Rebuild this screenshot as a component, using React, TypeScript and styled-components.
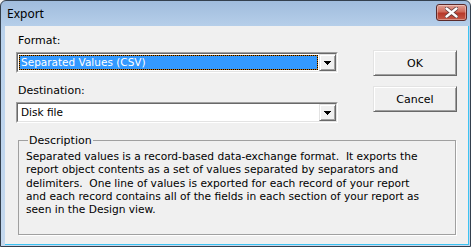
import React from "react";
import styled, { createGlobalStyle } from "styled-components";

const Global = createGlobalStyle`
  html, body { margin: 0; padding: 0; background: #f0f0f0; }
  body { width: 471px; height: 247px; overflow: hidden; }
`;

const UI = `"DejaVu Sans", Verdana, sans-serif`;

const Window = styled.div`
  box-sizing: border-box;
  width: 471px;
  height: 247px;
  display: flex;
  flex-direction: column;
  border: 1px solid #34404e;
  border-radius: 6px 6px 0 0;
  background: linear-gradient(#a0bcdd, #bad2ec 30px, #c4d8ee);
  overflow: hidden;
`;

const TitleBar = styled.div`
  height: 25px;
  flex: none;
  display: flex;
  align-items: center;
  justify-content: space-between;
  padding: 0 3px 0 6px;
`;

const Title = styled.span`
  font-family: "Noto Sans", "Open Sans", sans-serif;
  font-size: 12px;
  color: #000;
  margin-top: -1px;
`;

const CloseButton = styled.div`
  box-sizing: border-box;
  width: 31px;
  height: 17px;
  margin-top: -3px;
  border: 1px solid #5b2a2a;
  border-radius: 3px;
  background: linear-gradient(#e0a195, #cf6a5a 45%, #b7392a 55%, #c45a48);
  box-shadow: inset 0 0 0 1px rgba(255, 255, 255, 0.35);
  display: flex;
  align-items: center;
  justify-content: center;
`;

const Client = styled.div`
  flex: 1;
  margin: 0 1px 1px 4px;
  background: #f0f0f0;
  border-right: 1px solid #3cc3f2;
  border-bottom: 1px solid #3cc3f2;
  padding: 8px 0 0 11px;
  display: flex;
  flex-direction: column;
  font-family: ${UI};
  color: #000;
`;

const TopArea = styled.div`
  display: flex;
  align-items: flex-start;
`;

const FormColumn = styled.div`
  width: 322px;
  display: flex;
  flex-direction: column;
`;

const Label = styled.div<{ $gap?: number }>`
  font-size: 11px;
  line-height: 13px;
  margin-left: 2px;
  margin-top: ${(p) => p.$gap ?? 0}px;
`;

const Combo = styled.div`
  box-sizing: border-box;
  height: 21px;
  margin-top: 5px;
  display: flex;
  border-style: solid;
  border-width: 1px;
  border-color: #a0a0a0 #ffffff #ffffff #a0a0a0;
  background: #fff;
`;

const ComboInner = styled.div`
  flex: 1;
  display: flex;
  border-style: solid;
  border-width: 1px;
  border-color: #696969 #e3e3e3 #e3e3e3 #696969;
`;

const ValueArea = styled.div`
  flex: 1;
  padding: 1px;
  display: flex;
`;

const Highlight = styled.div<{ $selected?: boolean }>`
  flex: 1;
  background: ${(p) => (p.$selected ? "#c87814" : "transparent")};
  display: flex;
`;

const HighlightFill = styled.div<{ $selected?: boolean }>`
  flex: 1;
  box-sizing: border-box;
  border: 1px ${(p) => (p.$selected ? "dotted #000" : "solid transparent")};
  background: ${(p) => (p.$selected ? "#3399ff" : "#fff")};
  background-clip: padding-box;
  color: ${(p) => (p.$selected ? "#fff" : "#000")};
  font-size: 10.5px;
  line-height: 13px;
  padding-left: 1px;
  white-space: nowrap;
`;

const ArrowButton = styled.div`
  box-sizing: border-box;
  width: 17px;
  display: flex;
  align-items: center;
  justify-content: center;
  background: #f0f0f0;
  border-style: solid;
  border-width: 1px;
  border-color: #e3e3e3 #696969 #696969 #e3e3e3;
  box-shadow: inset 1px 1px 0 #fff, inset -1px -1px 0 #a0a0a0;
`;

const ButtonColumn = styled.div`
  margin-left: 35px;
  margin-top: 16px;
  display: flex;
  flex-direction: column;
  gap: 10px;
`;

const Button = styled.div`
  box-sizing: border-box;
  width: 84px;
  height: 26px;
  display: flex;
  align-items: center;
  justify-content: center;
  font-size: 11px;
  background: #f0f0f0;
  border-style: solid;
  border-width: 1px;
  border-color: #e3e3e3 #696969 #696969 #e3e3e3;
  box-shadow: inset 1px 1px 0 #fff, inset -1px -1px 0 #a0a0a0;
`;

const GroupBox = styled.fieldset`
  box-sizing: border-box;
  margin: 11px 0 0 2px;
  width: 438px;
  height: 101px;
  padding: 3px 6px 0 7px;
  border: 1px solid #a0a0a0;
  box-shadow: 1px 1px 0 #fff;
  min-width: 0;
`;

const Legend = styled.legend`
  font-size: 11px;
  line-height: 13px;
  padding: 0 1px;
  margin-left: 2px;
`;

const Description = styled.div`
  font-size: 10.65px;
  line-height: 13.3px;
  white-space: pre;
`;

const Arrow = () => (
  <svg width="7" height="4" viewBox="0 0 7 4" shapeRendering="crispEdges">
    <path d="M0 0h7v1H0zM1 1h5v1H1zM2 2h3v1H2zM3 3h1v1H3z" fill="#000" />
  </svg>
);

const CloseX = () => (
  <svg width="13" height="11" viewBox="0 0 13 11">
    <path
      d="M1.5 1.5 L11.5 9.5 M11.5 1.5 L1.5 9.5"
      stroke="#5a3a3a"
      strokeWidth="4"
      strokeLinecap="round"
    />
    <path
      d="M1.5 1.5 L11.5 9.5 M11.5 1.5 L1.5 9.5"
      stroke="#fff"
      strokeWidth="2.4"
      strokeLinecap="round"
    />
  </svg>
);

const ComboBox = ({ value, selected }: { value: string; selected?: boolean }) => (
  <Combo>
    <ComboInner>
      <ValueArea>
        <Highlight $selected={selected}>
          <HighlightFill $selected={selected}>{value}</HighlightFill>
        </Highlight>
      </ValueArea>
      <ArrowButton>
        <Arrow />
      </ArrowButton>
    </ComboInner>
  </Combo>
);

const text = [
  "Separated values is a record-based data-exchange format.  It exports the",
  "report object contents as a set of values separated by separators and",
  "delimiters.  One line of values is exported for each record of your report",
  "and each record contains all of the fields in each section of your report as",
  "seen in the Design view.",
].join("\n");

export default function App() {
  return (
    <>
      <Global />
      <Window>
        <TitleBar>
          <Title>Export</Title>
          <CloseButton>
            <CloseX />
          </CloseButton>
        </TitleBar>
        <Client>
          <TopArea>
            <FormColumn>
              <Label>Format:</Label>
              <ComboBox value="Separated Values (CSV)" selected />
              <Label $gap={11}>Destination:</Label>
              <ComboBox value="Disk file" />
            </FormColumn>
            <ButtonColumn>
              <Button>OK</Button>
              <Button>Cancel</Button>
            </ButtonColumn>
          </TopArea>
          <GroupBox>
            <Legend>Description</Legend>
            <Description>{text}</Description>
          </GroupBox>
        </Client>
      </Window>
    </>
  );
}
